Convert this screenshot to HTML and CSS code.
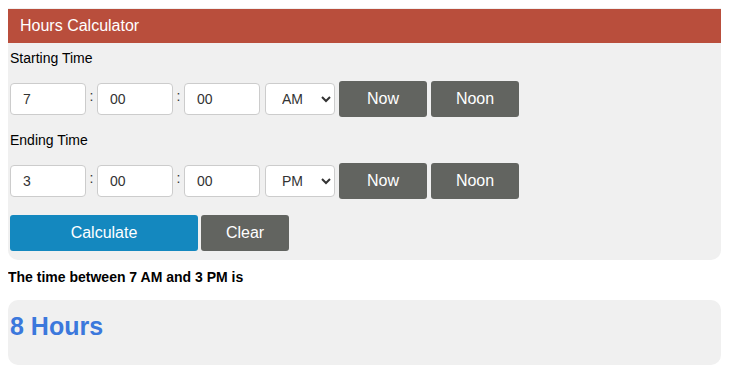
FILE: index.html
```html
<!DOCTYPE html>
<html lang="en">

<head>
  <meta charset="UTF-8">
  <title>Hours Calculator</title>
  <link rel="stylesheet" href="styles.css">
</head>

<body>

  <div class="panel">
    <div class="panel-head">Hours Calculator</div>

    <div class="field-label">Starting Time</div>
    <div class="time-row">
      <input type="text" class="time-box" value="7">
      <span class="colon">:</span>
      <input type="text" class="time-box" value="00">
      <span class="colon">:</span>
      <input type="text" class="time-box" value="00">
      <select class="ampm">
        <option selected>AM</option>
        <option>PM</option>
      </select>
      <button class="btn btn-grey">Now</button>
      <button class="btn btn-grey">Noon</button>
    </div>

    <div class="field-label">Ending Time</div>
    <div class="time-row">
      <input type="text" class="time-box" value="3">
      <span class="colon">:</span>
      <input type="text" class="time-box" value="00">
      <span class="colon">:</span>
      <input type="text" class="time-box" value="00">
      <select class="ampm">
        <option>AM</option>
        <option selected>PM</option>
      </select>
      <button class="btn btn-grey">Now</button>
      <button class="btn btn-grey">Noon</button>
    </div>

    <div class="action-row">
      <button class="btn btn-blue">Calculate</button>
      <button class="btn btn-grey">Clear</button>
    </div>
  </div>

  <div class="summary">The time between 7 AM and 3 PM is</div>

  <div class="result">
    <div class="result-value">8 Hours</div>
  </div>

</body>

</html>
```

FILE: styles.css
```css
body {
  margin: 8px;
  font-family: 'Liberation Sans', Arial, sans-serif;
  font-size: 14px;
  color: #000;
  background: #fff;
}

.panel {
  background: #f0f0f0;
  border-radius: 0 0 10px 10px;
  padding: 1px 0 9px;
}

.panel-head {
  background: #b94e3c;
  color: #fff;
  font-size: 16px;
  height: 34px;
  line-height: 34px;
  padding-left: 12px;
}

.field-label {
  line-height: 16px;
  margin: 7px 2px 15px;
}

.time-row {
  display: flex;
  align-items: center;
  padding-left: 2px;
  margin-bottom: 15px;
}

.time-box {
  box-sizing: border-box;
  width: 76px;
  height: 32px;
  padding: 0 12px;
  border: 1px solid #ccc;
  border-radius: 4px;
  font-family: inherit;
  font-size: 14px;
  color: #333;
  background: #fff;
}

.colon {
  width: 11px;
  text-align: center;
  color: #333;
  position: relative;
  top: -3px;
}

.ampm {
  box-sizing: border-box;
  width: 70px;
  height: 32px;
  margin: 0 4px 0 5px;
  padding-left: 12px;
  border: 1px solid #ccc;
  border-radius: 4px;
  font-family: inherit;
  font-size: 14px;
  color: #333;
  background: #fff;
}

.btn {
  height: 36px;
  width: 88px;
  border: none;
  border-radius: 3px;
  color: #fff;
  font-family: inherit;
  font-size: 16px;
  padding: 0;
}

.btn-grey {
  background: #626460;
}

.time-row .btn + .btn {
  margin-left: 4px;
}

.action-row {
  display: flex;
  padding-left: 2px;
  margin-top: 16px;
}

.btn-blue {
  width: 188px;
  background: #1488bf;
  margin-right: 3px;
}

.summary {
  font-weight: bold;
  line-height: 16px;
  margin: 9px 0 15px;
}

.result {
  background: #f0f0f0;
  border-radius: 10px;
  height: 65px;
  box-sizing: border-box;
  padding: 12px 2px 0;
}

.result-value {
  color: #3b78dc;
  font-size: 25px;
  font-weight: bold;
  line-height: 28px;
}
```
